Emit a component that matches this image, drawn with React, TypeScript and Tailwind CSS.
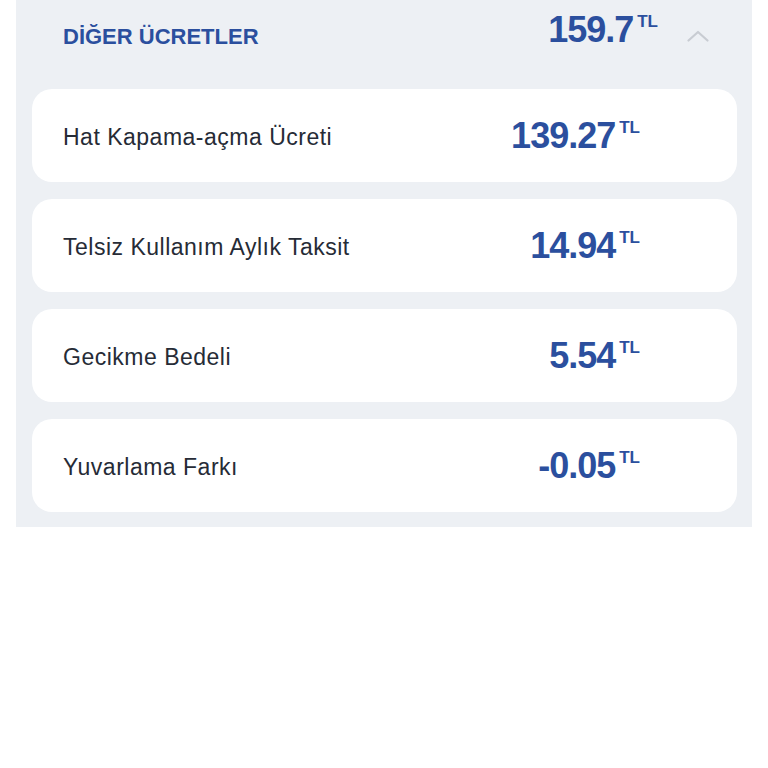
const items = [
  { label: 'Hat Kapama-açma Ücreti', amount: '139.27' },
  { label: 'Telsiz Kullanım Aylık Taksit', amount: '14.94' },
  { label: 'Gecikme Bedeli', amount: '5.54' },
  { label: 'Yuvarlama Farkı', amount: '-0.05' },
]

function Amount({ value, className = '' }: { value: string; className?: string }) {
  return (
    <div className={`flex items-start text-[#2b4f9e] ${className}`}>
      <span className="text-[36px] leading-[40px] font-bold tracking-[-1px]">{value}</span>
      <span className="ml-[4px] mt-[4px] text-[17px] leading-[16px] font-bold">TL</span>
    </div>
  )
}

export default function App() {
  return (
    <div className="min-h-[768px] bg-white font-['Liberation_Sans',Arial,sans-serif]">
      <div className="mx-[16px] w-[736px] bg-[#edf0f4] pb-[15px]">
        <div className="flex h-[72px] items-center pl-[47px] pr-[43px]">
          <h2 className="flex-1 text-[22px] font-bold text-[#2b4f9e]">DİĞER ÜCRETLER</h2>
          <Amount value="159.7" className="mb-[13px]" />
          <svg className="ml-[29px] h-[14px] w-[22px]" viewBox="0 0 22 14" fill="none">
            <path d="M1.5 11.5 L11 3 L20.5 11.5" stroke="#c8ccd2" strokeWidth="2.2" strokeLinecap="round" strokeLinejoin="round" />
          </svg>
        </div>

        <div className="mt-[17px] flex flex-col gap-[17px] pl-[16px] pr-[15px]">
          {items.map((item) => (
            <div
              key={item.label}
              className="flex h-[93px] items-center justify-between rounded-[20px] bg-white pl-[31px] pr-[97px]"
            >
              <span className="mt-[4px] text-[23px] tracking-[0.5px] text-[#262b36]">{item.label}</span>
              <Amount value={item.amount} />
            </div>
          ))}
        </div>
      </div>
    </div>
  )
}
